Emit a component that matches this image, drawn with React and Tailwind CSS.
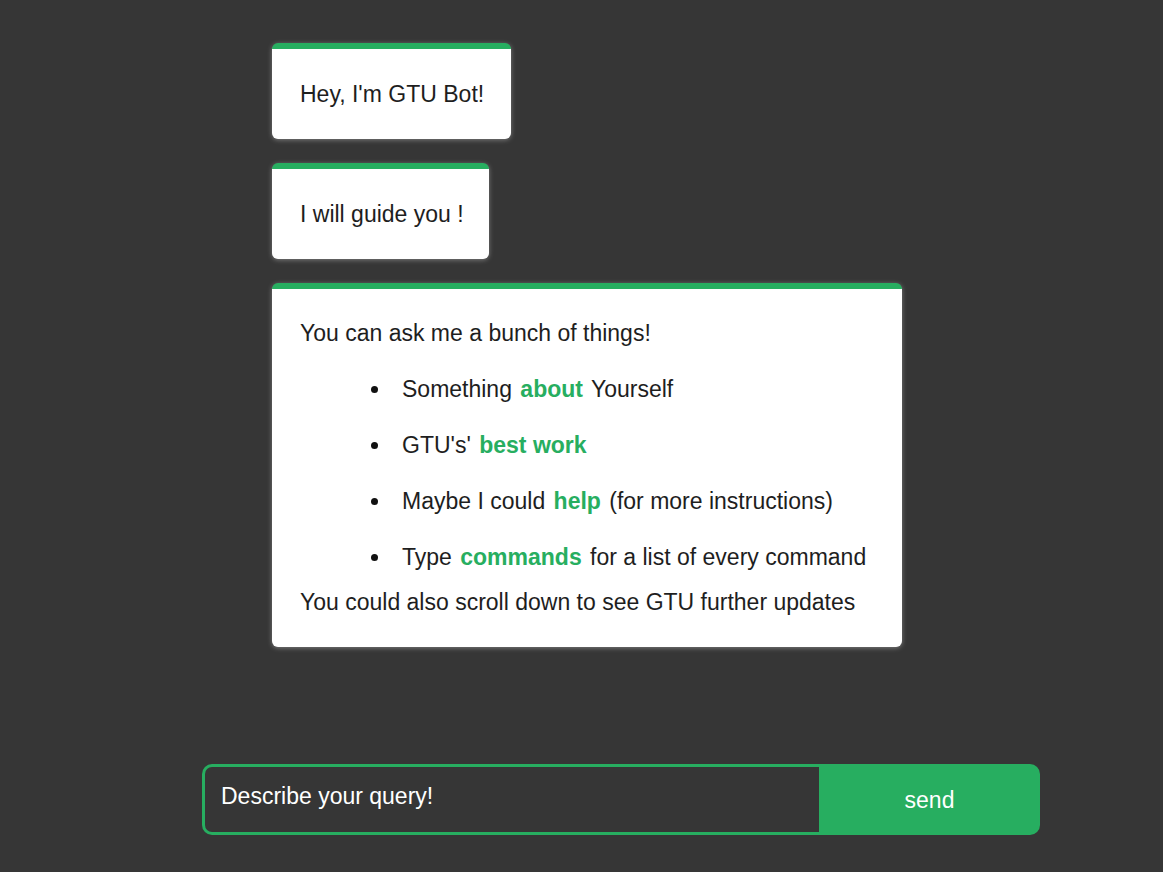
import React, { useState } from 'react';

const Bubble = ({ children, className = '' }) => (
  <div
    className={`bg-white rounded-[6px] border-t-[6px] border-[#27ae60] shadow-[0_1px_5px_rgba(255,255,255,0.35)] text-[#1e1e1e] ${className}`}
  >
    {children}
  </div>
);

const Hl = ({ children }) => <b className="text-[#27ae60] font-bold mx-[2px]">{children}</b>;

const Item = ({ children }) => (
  <li className="flex items-center py-[16px]">
    <span className="w-[31px] shrink-0">
      <span className="block w-[7px] h-[7px] rounded-full bg-[#111]" />
    </span>
    <span>{children}</span>
  </li>
);

export default function App() {
  const [query, setQuery] = useState('');

  return (
    <div
      className="h-screen bg-[#363636] flex flex-col overflow-hidden"
      style={{ fontFamily: '"Liberation Sans", Arial, sans-serif' }}
    >
      {/* Chat area */}
      <div className="flex-1 pt-[43px] pl-[272px] flex flex-col items-start gap-[24px]">
        <Bubble className="h-[96px] flex items-center pl-[28px] pr-[27px] text-[23px]">
          <span>Hey, I'm GTU Bot!</span>
        </Bubble>
        <Bubble className="h-[96px] flex items-center pl-[28px] pr-[25px] text-[23px]">
          <span>I will guide you !</span>
        </Bubble>
        <Bubble className="w-[630px] px-[28px] pt-[32px] pb-[33px] text-[23px] leading-[24px]">
          <p>You can ask me a bunch of things!</p>
          <ul className="pl-[71px] mt-[16px]">
            <Item>
              Something <Hl>about</Hl> Yourself
            </Item>
            <Item>
              GTU's' <Hl>best work</Hl>
            </Item>
            <Item>
              Maybe I could <Hl>help</Hl> (for more instructions)
            </Item>
            <Item>
              Type <Hl>commands</Hl> for a list of every command
            </Item>
          </ul>
          <p className="mt-[5px]">You could also scroll down to see GTU further updates</p>
        </Bubble>
      </div>

      {/* Input bar */}
      <div className="pl-[202px] pb-[37px] flex">
        <div className="flex w-[838px] h-[71px]">
          <textarea
            value={query}
            onChange={(e) => setQuery(e.target.value)}
            placeholder="Describe your query!"
            className="flex-1 resize-none bg-[#363636] border-[3px] border-r-0 border-[#27ae60] rounded-l-[10px] pl-[16px] pt-[17px] text-white text-[23px] leading-[24px] placeholder:text-white outline-none"
          />
          <button className="w-[221px] bg-[#27ae60] text-white text-[23px] rounded-r-[10px] pt-[2px]">
            send
          </button>
        </div>
      </div>
    </div>
  );
}
